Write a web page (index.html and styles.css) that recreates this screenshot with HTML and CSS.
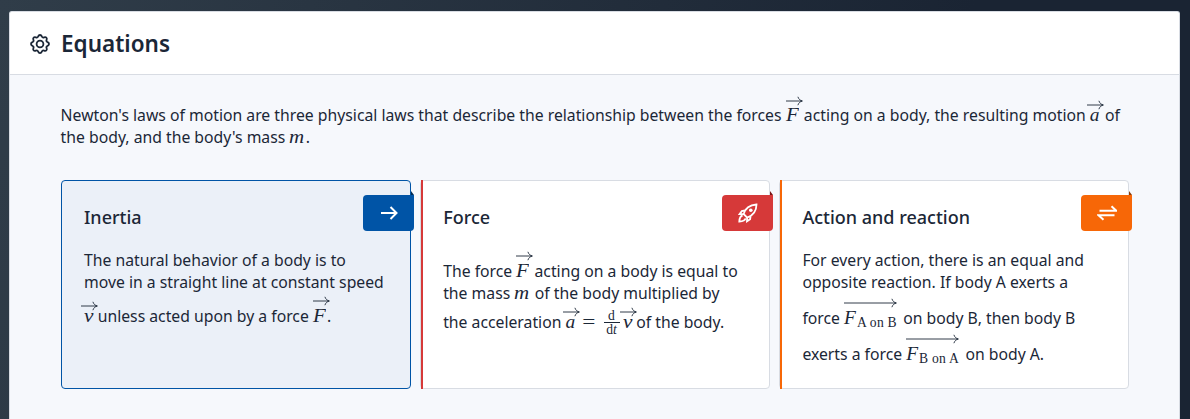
FILE: index.html
```html
<!DOCTYPE html>
<html lang="en">
<head>
<meta charset="utf-8">
<title>Equations</title>
<link rel="stylesheet" href="styles.css">
</head>
<body>
<svg class="defs" width="0" height="0" aria-hidden="true">
  <symbol id="vec" viewBox="0 0 17 10"><path d="M0 5H16M11.9 .8C12.6 3.1 14.2 4.5 16.4 5C14.2 5.500 12.600 6.900 11.900 9.200"/></symbol>
  <symbol id="vec-long" viewBox="0 0 53 10"><path d="M0 5H52M47.900 .8C48.600 3.100 50.200 4.500 52.400 5C50.200 5.500 48.600 6.900 47.900 9.200"/></symbol>
</svg>
<main class="panel">
  <header class="panel-head">
    <svg class="gear" viewBox="0 0 20 20"><circle cx="10" cy="10" r="3.4"/><path d="M8.200 2.400C8.900 .5 11.100 .5 11.800 2.400C12.300 3.500 13.200 3.800 14.100 3.400C16 2.600 17.400 4 16.600 5.900C16.200 6.800 16.500 7.700 17.600 8.200C19.500 8.900 19.500 11.100 17.600 11.800C16.500 12.300 16.200 13.200 16.600 14.100C17.400 16 16 17.400 14.100 16.600C13.200 16.200 12.300 16.500 11.800 17.600C11.100 19.500 8.900 19.500 8.200 17.600C7.700 16.500 6.800 16.200 5.900 16.600C4 17.400 2.600 16 3.400 14.100C3.800 13.200 3.500 12.300 2.400 11.800C.5 11.100 .5 8.900 2.400 8.200C3.500 7.700 3.800 6.800 3.400 5.900C2.600 4 4 2.600 5.900 3.400C6.800 3.800 7.700 3.500 8.200 2.400Z"/></svg>
    <h1>Equations</h1>
  </header>
  <div class="panel-body">
    <p class="intro">Newton's laws of motion are three physical laws that describe the relationship between the forces <span class="math f"><i>F</i><svg class="arrow"><use href="#vec"/></svg></span> acting on a body, the resulting motion <span class="math a"><i>a</i><svg class="arrow"><use href="#vec"/></svg></span> of<br>the body, and the body's mass <span class="math m"><i>m</i></span>.</p>
    <div class="cards">
      <section class="card active">
        <h2>Inertia</h2>
        <span class="badge blue"><svg viewBox="0 0 20 20"><path d="M2 10H17.500M11.500 4L17.500 10L11.500 16"/></svg></span>
        <p>The natural behavior of a body is to<br>move in a straight line at constant speed<br><span class="math v"><i>v</i><svg class="arrow"><use href="#vec"/></svg></span> unless acted upon by a force <span class="math f tall"><i>F</i><svg class="arrow"><use href="#vec"/></svg></span>.</p>
      </section>
      <section class="card red-edge">
        <h2>Force</h2>
        <span class="badge red"><svg viewBox="0 0 20 20"><path d="M5.600 11C7 6.200 10.600 2 18.500 1.500C18.400 8.700 14.200 12.800 9.200 14.600ZM6.900 7.500L3.800 8.100L1.600 11.100L5.600 11M12.600 13.100L12.100 16.200L9 18.300L9.200 14.600M4.600 12.500C2 13.100 1.500 15.500 1.300 18.500C4.500 18.500 6.900 17.900 7.500 15.400"/><circle class="dot" cx="12.800" cy="7.300" r="1.800"/></svg></span>
        <p>The force <span class="math f tall first"><i>F</i><svg class="arrow"><use href="#vec"/></svg></span> acting on a body is equal to<br>the mass <span class="math m"><i>m</i></span> of the body multiplied by<br>the acceleration <span class="math a mid"><i>a</i><svg class="arrow"><use href="#vec"/></svg></span><span class="math eq">=</span><span class="frac"><span>d</span><span>d<i>t</i></span></span><span class="math v"><i>v</i><svg class="arrow"><use href="#vec"/></svg></span> of the body.</p>
      </section>
      <section class="card orange-edge">
        <h2>Action and reaction</h2>
        <span class="badge orange"><svg viewBox="0 0 20 20"><path d="M2.500 7.800H19.300L14.500 3.300M17.500 12.300H1.500L6.500 16.800"/></svg></span>
        <p>For every action, there is an equal and<br>opposite reaction. If body A exerts a<br>force <span class="math long"><i>F</i><span class="sub">A on B</span><svg class="arrow"><use href="#vec-long"/></svg></span> on body B, then body B<br>exerts a force <span class="math long"><i>F</i><span class="sub">B on A</span><svg class="arrow"><use href="#vec-long"/></svg></span> on body A.</p>
      </section>
    </div>
  </div>
</main>
</body>
</html>
```
FILE: styles.css
```css
* { box-sizing: border-box; }
html, body { height: 100%; }
body {
  margin: 0;
  padding: 11px 10px 0 9px;
  overflow: hidden;
  background: linear-gradient(105deg, #303d49 0%, #1a2433 75%);
  color: #1b2737;
  font: 15.75px/22px "Noto Sans", sans-serif;
}
.defs { position: absolute; }
svg { fill: none; stroke: currentColor; }
h1, h2, p { margin: 0; }
.panel {
  height: 100%;
  border: 1px solid #d8dce3;
  border-bottom: 0;
  border-radius: 3px 3px 0 0;
  background: #f6f8fc;
}
.panel-head {
  display: flex;
  align-items: center;
  gap: 11px;
  height: 63px;
  padding-left: 20px;
  border-bottom: 1px solid #d8dce3;
  border-radius: 2px 2px 0 0;
  background: #fff;
}
.gear { width: 20px; height: 20px; stroke-width: 1.8; margin-top: 2px; }
h1 { padding-top: 2px; font-size: 22.5px; line-height: 30px; font-weight: 600; }
.panel-body { padding: 29px 50px 0 51px; }
.intro { height: 76px; margin-left: -.4px; white-space: nowrap; }
.cards {
  display: grid;
  grid-template-columns: repeat(3, 1fr);
  gap: 9.6px;
  height: 209px;
}
.card {
  position: relative;
  padding: 24px 20px 0 22px;
  border: 1px solid #d8dce3;
  border-radius: 4px;
  background: #fff;
  white-space: nowrap;
}
.card.active { border-color: #0054a6; background: #ebf0f8; }
.red-edge::before, .orange-edge::before {
  content: "";
  position: absolute;
  top: -1px;
  bottom: -1px;
  left: 0;
  width: 2px;
  background: #d63939;
}
.orange-edge::before { background: #f76707; }
h2 { font-size: 18px; line-height: 24px; font-weight: 500; margin-bottom: 20px; }
.badge {
  position: absolute;
  top: 14px;
  right: -4px;
  width: 51px;
  height: 36px;
  display: flex;
  align-items: center;
  justify-content: center;
  border-radius: 4px 0 4px 4px;
  color: #fff;
}
.badge::after {
  content: "";
  position: absolute;
  right: 0;
  top: -4px;
  border-left: 3px solid #002a53;
  border-top: 4px solid transparent;
}
.badge svg { width: 20px; height: 20px; margin-left: 1px; stroke-width: 2; }
.red svg { stroke-width: 1.8; }
.badge .dot { fill: #fff; stroke: none; }
.blue { background: #0054a6; }
.red { background: #d63939; }
.red::after { border-left-color: #781313; }
.orange { background: #f76707; }
.orange::after { border-left-color: #8b3802; }
.math {
  position: relative;
  display: inline-block;
  white-space: nowrap;
  font: 19.4px/22px "Liberation Serif", serif;
}
.math i { display: inline-block; transform-origin: 0 100%; }
.arrow { position: absolute; width: 17px; height: 10px; left: 0; top: -8px; stroke-width: .9; }
.f { width: 14.1px; }
.f i { transform: scaleX(1.08); }
.a { width: 11px; }
.a .arrow { left: -3px; top: -4px; }
.m { width: 16.4px; }
.m i { transform: scaleX(1.08); }
.v { width: 9.6px; }
.v i { transform: scaleX(1.1); }
.v .arrow { left: -3px; top: -4px; }
.tall { padding-top: 12px; }
.tall .arrow { top: 3px; }
.first { padding-top: 11px; }
.first .arrow { top: 2px; }
.mid { padding-top: 7px; }
.mid .arrow { top: 3px; }
.eq { width: 27px; padding-right: 3px; text-align: center; transform: scaleX(1.2); }
.frac {
  display: inline-flex;
  flex-direction: column;
  width: 16px;
  margin-right: 3px;
  vertical-align: 8px;
  text-align: center;
  font: 13.6px/12px "Liberation Serif", serif;
}
.frac span:first-child { border-bottom: 1px solid; }
.frac span:last-child { padding-top: 1px; }
.long { width: 55px; padding-top: 14px; }
.long i { width: 12.8px; }
.long .arrow { width: 53px; top: 5px; }
.sub { position: relative; top: 2.5px; font-size: 13.6px; line-height: 12px; letter-spacing: .25px; }
```
